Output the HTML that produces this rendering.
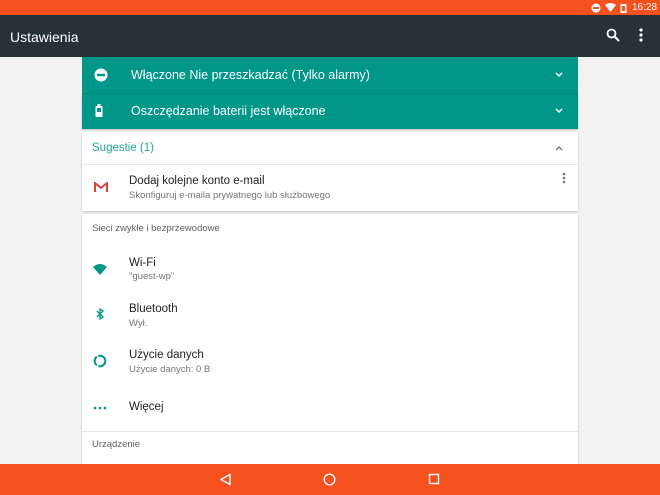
<!DOCTYPE html><html><head><meta charset="utf-8"><style>
body{margin:0;width:660px;height:495px;overflow:hidden;background:#f2f2f2;font-family:"Liberation Sans","Noto Sans CJK JP",sans-serif;position:relative}
.abs{position:absolute}
.sb{left:0;top:0;width:660px;height:15px;background:#f4511e;color:#fff;font-size:10px}
.tb{left:0;top:15px;width:660px;height:42px;background:#263238;color:#fff}
.card{left:82px;width:496px;background:#fff;box-shadow:0 1px 2px rgba(0,0,0,.2)}
.t{position:absolute;font-size:12.5px;color:#212121}
.s{position:absolute;font-size:9.5px;color:#757575}
.nav{left:0;top:464px;width:660px;height:31px;background:#f4511e}
</style></head><body>
<div class="abs sb"><svg class="abs" style="left:591px;top:3px" width="10" height="10"><circle cx="5" cy="5" r="4.5" fill="#fff"/><rect x="2" y="4" width="6" height="2" fill="#f4511e"/></svg>
<svg class="abs" style="left:605px;top:3px" width="11" height="10"><path d="M0 2Q5.5-2 11 2L5.5 9Z" fill="#fff"/></svg>
<svg class="abs" style="left:620px;top:3px" width="7" height="10"><rect x="0.5" y="1" width="6" height="9" fill="#fff"/><rect x="2" y="3" width="3" height="5" fill="#f4511e"/></svg>
<span class="abs" style="left:632px;top:2px">16:28</span></div>
<div class="abs tb"><span class="abs" style="left:10px;top:14px;font-size:14px">Ustawienia</span>
<svg class="abs" style="left:606px;top:13px" width="14" height="14"><circle cx="5.5" cy="5.5" r="4" stroke="#fff" stroke-width="1.8" fill="none"/><path d="M8.5 8.5L13 13" stroke="#fff" stroke-width="2"/></svg>
<svg class="abs" style="left:638px;top:13px" width="6" height="14"><circle cx="3" cy="2" r="1.6" fill="#fff"/><circle cx="3" cy="7" r="1.6" fill="#fff"/><circle cx="3" cy="12" r="1.6" fill="#fff"/></svg></div>
<div class="abs card" style="top:57px;height:36px;background:#009688;border-bottom:1px solid #00897b;box-shadow:none">
<svg class="abs" style="left:12px;top:11px" width="14" height="14"><circle cx="7" cy="7" r="6.5" fill="#fff"/><rect x="3" y="5.8" width="8" height="2.4" fill="#009688"/></svg>
<span class="t" style="left:49px;top:11px;color:#fff">Włączone Nie przeszkadzać (Tylko alarmy)</span>
<svg class="abs" style="left:472px;top:14px" width="10" height="8"><path d="M2 2L5 5L8 2" stroke="#fff" stroke-width="1.5" fill="none"/></svg></div>
<div class="abs card" style="top:94px;height:35px;background:#009688">
<svg class="abs" style="left:13px;top:10px" width="8" height="14"><rect x="2.5" y="0" width="3" height="2" fill="#fff"/><rect x="0.5" y="2" width="7" height="11" rx="1" fill="#fff"/><rect x="2" y="4" width="4" height="4" fill="#009688"/></svg>
<span class="t" style="left:49px;top:10px;color:#fff">Oszczędzanie baterii jest włączone</span>
<svg class="abs" style="left:472px;top:13px" width="10" height="8"><path d="M2 2L5 5L8 2" stroke="#fff" stroke-width="1.5" fill="none"/></svg></div>
<div class="abs card" style="top:132px;height:79px">
<span class="t" style="left:10px;top:10px;font-size:11.5px;color:#26a69a">Sugestie (1)</span>
<svg class="abs" style="left:472px;top:12px" width="10" height="8"><path d="M2 6L5 3L8 6" stroke="#757575" stroke-width="1.3" fill="none"/></svg>
<div class="abs" style="left:0;top:32px;width:496px;height:1px;background:#e6e6e6"></div>
<svg class="abs" style="left:12px;top:50px" width="14" height="11"><path d="M1 10V1L7 6L13 1V10" stroke="#d44638" stroke-width="2" fill="none"/></svg>
<span class="t" style="left:47px;top:43px;font-size:11.5px">Dodaj kolejne konto e-mail</span>
<span class="s" style="left:47px;top:58px;font-size:9.5px">Skonfiguruj e-maila prywatnego lub służbowego</span>
<svg class="abs" style="left:480px;top:40px" width="4" height="12"><circle cx="2" cy="2" r="1.3" fill="#757575"/><circle cx="2" cy="6" r="1.3" fill="#757575"/><circle cx="2" cy="10" r="1.3" fill="#757575"/></svg></div>
<div class="abs card" style="top:214px;height:260px">
<span class="s" style="left:10px;top:9px;font-size:9.5px;color:#616161">Sieci zwykłe i bezprzewodowe</span>
<svg class="abs" style="left:11px;top:50px" width="14" height="11"><path d="M0 3Q7-3 14 3L7 11Z" fill="#009688"/></svg>
<span class="t" style="left:47px;top:43px;font-size:11.5px">Wi-Fi</span><span class="s" style="left:47px;top:57px;font-size:9.5px">"guest-wp"</span>
<svg class="abs" style="left:14px;top:94px" width="8" height="12"><path d="M1 3L7 9L4 11V1L7 3L1 9" stroke="#009688" stroke-width="1.3" fill="none"/></svg>
<span class="t" style="left:47px;top:89px;font-size:11.5px">Bluetooth</span><span class="s" style="left:47px;top:104px;font-size:9.5px">Wył.</span>
<svg class="abs" style="left:11px;top:140px" width="14" height="14"><circle cx="7" cy="7" r="5.3" stroke="#009688" stroke-width="2" fill="none" stroke-dasharray="10 1.5"/></svg>
<span class="t" style="left:47px;top:135px;font-size:11.5px">Użycie danych</span><span class="s" style="left:47px;top:150px;font-size:9.5px">Użycie danych: 0 B</span>
<svg class="abs" style="left:11px;top:192px" width="14" height="4"><circle cx="2" cy="2" r="1.3" fill="#009688"/><circle cx="7" cy="2" r="1.3" fill="#009688"/><circle cx="12" cy="2" r="1.3" fill="#009688"/></svg>
<span class="t" style="left:47px;top:187px;font-size:11.5px">Więcej</span>
<div class="abs" style="left:0;top:217px;width:496px;height:1px;background:#e6e6e6"></div>
<span class="s" style="left:10px;top:225px;font-size:9.5px;color:#616161">Urządzenie</span></div>
<div class="abs nav">
<svg class="abs" style="left:219px;top:9px" width="13" height="13"><path d="M11 1.5L2 6.5L11 11.5Z" stroke="#fff" stroke-width="1.4" fill="none"/></svg>
<svg class="abs" style="left:323px;top:9px" width="13" height="13"><circle cx="6.5" cy="6.5" r="5.3" stroke="#fff" stroke-width="1.4" fill="none"/></svg>
<svg class="abs" style="left:428px;top:9px" width="12" height="12"><rect x="1.5" y="1.5" width="9" height="9" stroke="#fff" stroke-width="1.4" fill="none"/></svg></div>
</body></html>
